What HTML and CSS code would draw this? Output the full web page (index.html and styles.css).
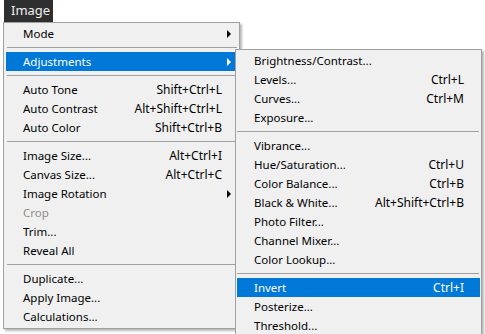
FILE: index.html
```html
<!DOCTYPE html>
<html>
<head>
<meta charset="utf-8">
<link rel="stylesheet" href="styles.css">
</head>
<body>
<div class="app">
  <div class="menubar"><span class="menubar-item">Image</span></div>
  <div class="menu main-menu">
    <div class="item"><span class="label">Mode</span><span class="key"></span><span class="arrow"></span></div>
    <div class="sep"></div>
    <div class="item active"><span class="label">Adjustments</span><span class="key"></span><span class="arrow"></span></div>
    <div class="sep"></div>
    <div class="item"><span class="label">Auto Tone</span><span class="key">Shift+Ctrl+L</span><span class="noarrow"></span></div>
    <div class="item"><span class="label">Auto Contrast</span><span class="key">Alt+Shift+Ctrl+L</span><span class="noarrow"></span></div>
    <div class="item"><span class="label">Auto Color</span><span class="key">Shift+Ctrl+B</span><span class="noarrow"></span></div>
    <div class="sep"></div>
    <div class="item"><span class="label">Image Size...</span><span class="key">Alt+Ctrl+I</span><span class="noarrow"></span></div>
    <div class="item"><span class="label">Canvas Size...</span><span class="key">Alt+Ctrl+C</span><span class="noarrow"></span></div>
    <div class="item"><span class="label">Image Rotation</span><span class="key"></span><span class="arrow"></span></div>
    <div class="item disabled"><span class="label">Crop</span><span class="key"></span><span class="noarrow"></span></div>
    <div class="item"><span class="label">Trim...</span><span class="key"></span><span class="noarrow"></span></div>
    <div class="item"><span class="label">Reveal All</span><span class="key"></span><span class="noarrow"></span></div>
    <div class="sep"></div>
    <div class="item"><span class="label">Duplicate...</span><span class="key"></span><span class="noarrow"></span></div>
    <div class="item"><span class="label">Apply Image...</span><span class="key"></span><span class="noarrow"></span></div>
    <div class="item"><span class="label">Calculations...</span><span class="key"></span><span class="noarrow"></span></div>
  </div>
  <div class="menu sub-menu">
    <div class="item"><span class="label">Brightness/Contrast...</span><span class="key"></span><span class="noarrow"></span></div>
    <div class="item"><span class="label">Levels...</span><span class="key">Ctrl+L</span><span class="noarrow"></span></div>
    <div class="item"><span class="label">Curves...</span><span class="key">Ctrl+M</span><span class="noarrow"></span></div>
    <div class="item"><span class="label">Exposure...</span><span class="key"></span><span class="noarrow"></span></div>
    <div class="sep"></div>
    <div class="item"><span class="label">Vibrance...</span><span class="key"></span><span class="noarrow"></span></div>
    <div class="item"><span class="label">Hue/Saturation...</span><span class="key">Ctrl+U</span><span class="noarrow"></span></div>
    <div class="item"><span class="label">Color Balance...</span><span class="key">Ctrl+B</span><span class="noarrow"></span></div>
    <div class="item"><span class="label">Black &amp; White...</span><span class="key">Alt+Shift+Ctrl+B</span><span class="noarrow"></span></div>
    <div class="item"><span class="label">Photo Filter...</span><span class="key"></span><span class="noarrow"></span></div>
    <div class="item"><span class="label">Channel Mixer...</span><span class="key"></span><span class="noarrow"></span></div>
    <div class="item"><span class="label">Color Lookup...</span><span class="key"></span><span class="noarrow"></span></div>
    <div class="sep"></div>
    <div class="item active"><span class="label">Invert</span><span class="key">Ctrl+I</span><span class="noarrow"></span></div>
    <div class="item"><span class="label">Posterize...</span><span class="key"></span><span class="noarrow"></span></div>
    <div class="item"><span class="label">Threshold...</span><span class="key"></span><span class="noarrow"></span></div>
  </div>
</div>
</body>
</html>
```
FILE: styles.css
```css
html, body {
  margin: 0;
  padding: 0;
  background: #ffffff;
  overflow: hidden;
}
body {
  font-family: "Noto Sans", "DejaVu Sans", sans-serif;
  font-size: 12px;
  color: #000;
  width: 485px;
  height: 334px;
}
.app {
  position: relative;
  width: 485px;
  height: 334px;
  overflow: hidden;
}
.menubar {
  display: flex;
  padding-left: 4px;
  height: 22px;
}
.menubar-item {
  background: #2f2f2f;
  color: #f0f0f0;
  width: 49px;
  height: 22px;
  line-height: 21px;
  padding-left: 7px;
  box-sizing: border-box;
  font-size: 13px;
}
.menu {
  background: #f0f0f0;
  border: 1px solid #a0a0a0;
  box-shadow: 2px 2px 2px rgba(0, 0, 0, 0.28);
  box-sizing: border-box;
  display: flex;
  flex-direction: column;
}
.main-menu {
  margin-left: 3px;
  width: 237px;
  padding: 1px 0 2px 0;
}
.sub-menu {
  position: absolute;
  left: 235px;
  top: 49px;
  width: 247px;
  height: 300px;
  padding: 1px 0 2px 0;
}
.item {
  display: grid;
  grid-template-columns: 1fr auto 15px;
  align-items: center;
  height: 19px;
  line-height: 19px;
  padding-left: 17px;
  white-space: nowrap;
  flex: none;
}
.label {
  font-size: 11.5px;
}
.key {
  font-size: 12px;
}
.main-menu .item {
  margin: 0 2px;
}
.sub-menu .item {
  margin: 0 1px;
  grid-template-columns: 1fr auto 16px;
}
.item.active {
  background: #0078d7;
  color: #ffffff;
}
.item.disabled {
  color: #8d8d8d;
}
.arrow {
  width: 0;
  height: 0;
  margin-left: 5px;
  border-left: 4px solid #000;
  border-top: 4px solid transparent;
  border-bottom: 4px solid transparent;
}
.item.active .arrow {
  border-left-color: #ffffff;
}
.sep {
  height: 1px;
  background: #a0a0a0;
  margin: 4px 2px 4px 3px;
  flex: none;
}
.sub-menu .sep {
  margin: 4px 2px 4px 1px;
}
```
